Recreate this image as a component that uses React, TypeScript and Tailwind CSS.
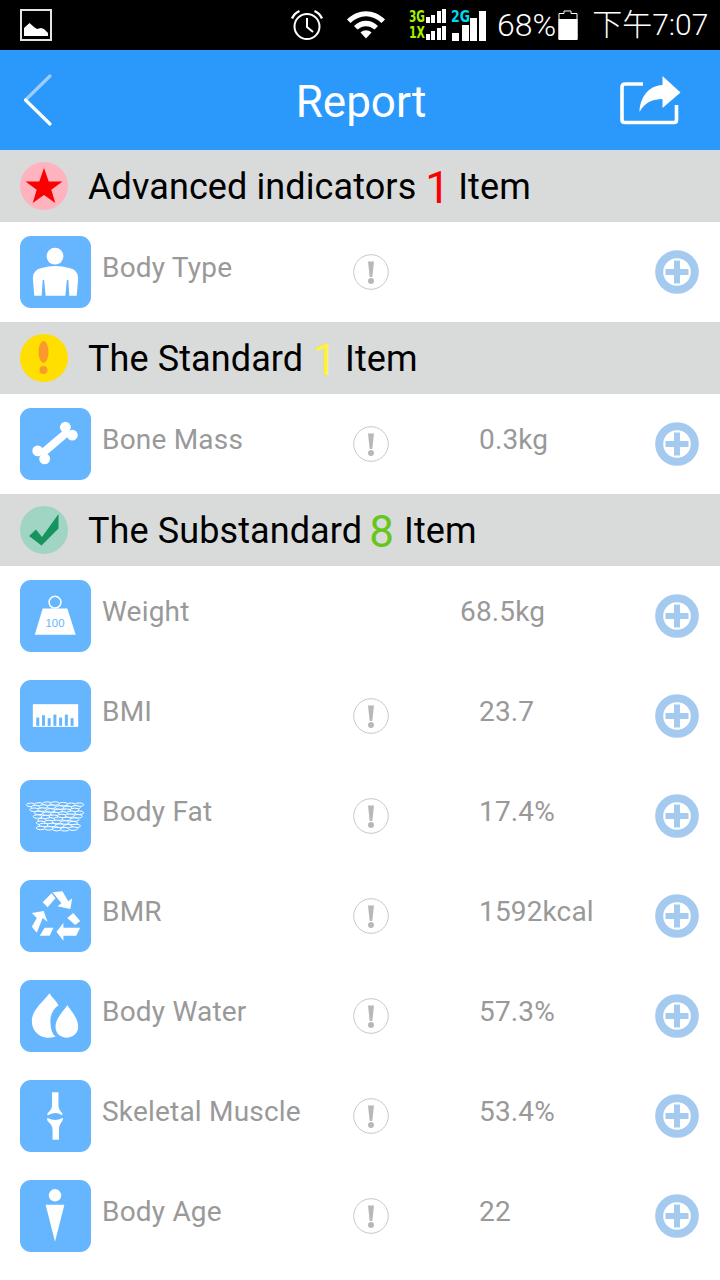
const ROBOTO = "font-['Roboto',sans-serif]"

function AlarmIcon() {
  return (
    <svg width="34" height="32" viewBox="0 0 34 32" fill="none" stroke="#fff">
      <circle cx="17" cy="17.5" r="12.5" strokeWidth="2" />
      <path d="M17 9v9l6 5" strokeWidth="2" />
      <path d="M2 9.5C3.5 6 6 3.5 9.5 2M32 9.5C30.5 6 28 3.5 24.5 2" strokeWidth="2.4" />
    </svg>
  )
}

function WifiIcon() {
  return (
    <svg width="40" height="30" viewBox="0 0 40 30" fill="#fff">
      <path d="M1 9.5C12 -1.5 28 -1.500 39 9.500L35.500 13C26 4 14 4 4.500 13Z" />
      <path d="M8 16C15 9 25 9 32 16L28.500 19.500C23 15 17 15 11.500 19.500Z" />
      <path d="M14.500 22.500C18 19.500 22 19.500 25.500 22.500L20 28.500Z" />
    </svg>
  )
}

function SignalIcon() {
  return (
    <svg width="78" height="32" viewBox="0 0 78 32" fontFamily="'DejaVu Sans Condensed','DejaVu Sans',sans-serif" fontWeight="700" fontSize="15">
      <text x="0" y="13" fill="#a4f000" textLength="16" lengthAdjust="spacingAndGlyphs">3G</text>
      <text x="0" y="29" fill="#a4f000" textLength="16" lengthAdjust="spacingAndGlyphs">1X</text>
      <text x="42" y="13" fill="#00d8f0" textLength="19" lengthAdjust="spacingAndGlyphs">2G</text>
      <g fill="#fff">
        <rect x="17" y="8" width="4" height="6" />
        <rect x="22" y="6" width="4" height="8" />
        <rect x="28" y="2" width="4" height="12" />
        <rect x="33" y="0" width="4" height="14" />
        <rect x="17" y="25" width="4" height="6" />
        <rect x="22" y="22" width="4" height="9" />
        <rect x="28" y="19" width="4" height="12" />
        <rect x="33" y="17" width="4" height="14" />
        <rect x="43" y="24" width="7" height="8" />
        <rect x="53" y="16" width="7" height="16" />
        <rect x="61" y="9" width="7" height="23" />
        <rect x="70" y="2" width="7" height="30" />
      </g>
    </svg>
  )
}

function StatusBar() {
  return (
    <div className="flex h-[50px] items-center bg-black text-white">
      <svg className="ml-5" width="32" height="32" viewBox="0 0 32 32">
        <rect x="1" y="1" width="30" height="30" fill="#000" stroke="#e5e5e5" strokeWidth="2" />
        <path d="M4 27V19L9.500 14 14 18 17 20 21 19 24 20 28 24V27Z" fill="#fff" />
      </svg>
      <div className="ml-[238px]"><AlarmIcon /></div>
      <div className="ml-[22px]"><WifiIcon /></div>
      <div className="ml-[23px]"><SignalIcon /></div>
      <span className={`ml-[10px] text-[32px] leading-none font-light ${ROBOTO}`}>68%</span>
      <svg className="ml-[2px]" width="20" height="30" viewBox="0 0 20 30">
        <path d="M6 1H13V3.500H19V29H1V3.500H6Z" fill="none" stroke="#fff" />
        <rect x="0.500" y="9" width="19" height="21" fill="#fff" />
      </svg>
      <span className="ml-[14px] text-[30px] leading-none font-light whitespace-nowrap font-['Roboto','Noto_Sans_CJK_TC',sans-serif]">下午7:07</span>
    </div>
  )
}

function Header() {
  return (
    <div className="relative flex h-[100px] items-center justify-center bg-[#2b99fc]">
      <svg className="absolute top-0 left-0" width="70" height="100" viewBox="0 0 70 100" fill="none" strokeWidth="3.200" strokeLinecap="round">
        <path d="M50 26L25.500 50" stroke="#9dcdfd" />
        <path d="M25.500 50L50 74" stroke="#fff" />
      </svg>
      <span className={`ml-[2px] pt-1 text-[44px] leading-none text-white ${ROBOTO}`}>Report</span>
      <svg className="absolute top-0 right-0" width="110" height="100" viewBox="0 0 110 100">
        <path d="M33 34H15Q12 34 12 37V70Q12 72.500 15 72.500H64Q66.500 72.500 66.500 70V55" fill="none" stroke="#fff" strokeWidth="3.600" />
        <path d="M52.500 26L70.500 42.500 52.500 58V49C43 49 35 52 29.500 62C30 47 39 35.500 52.500 35Z" fill="#fff" />
      </svg>
    </div>
  )
}

function StarBadge() {
  return (
    <svg width="48" height="48" viewBox="0 0 48 48">
      <circle cx="24" cy="24" r="24" fill="#ffb3bf" />
      <path d="M24 6L28.700 19.500H42.500L31.300 27.800 35.300 41 24 33 12.700 41 16.700 27.800 5.500 19.500H19.300Z" fill="#fb0000" />
    </svg>
  )
}

function WarnBadge() {
  return (
    <svg width="48" height="48" viewBox="0 0 48 48">
      <circle cx="24" cy="24" r="24" fill="#ffdf00" />
      <ellipse cx="23.500" cy="18" rx="5" ry="11" fill="#fb9a2c" />
      <circle cx="23.500" cy="36" r="4" fill="#fb9a2c" />
    </svg>
  )
}

function CheckBadge() {
  return (
    <svg width="48" height="48" viewBox="0 0 48 48">
      <circle cx="24" cy="24" r="24" fill="#a1d5c3" />
      <path d="M9 30L16 23.500 22 31 38.500 8V22.500L21.500 39.500Z" fill="#16935f" />
    </svg>
  )
}

function BodyTypeIcon() {
  return (
    <svg viewBox="0 0 72 72" className="h-full w-full" fill="#fff">
      <circle cx="35.500" cy="20" r="8.500" />
      <path d="M22 32Q36 28 50 32Q59 34 59 42L57.500 60H50L49 44H47.500L46 60H26L24.500 44H23L22 60H14.500L13 42Q13 34 22 32Z" />
    </svg>
  )
}

function BoneIcon() {
  return (
    <svg viewBox="0 0 72 72" className="h-full w-full" fill="#fff">
      <path d="M21 47L49 23" stroke="#fff" strokeWidth="8" />
      <circle cx="46" cy="19" r="5.500" /><circle cx="53" cy="27" r="5.500" />
      <circle cx="18" cy="43" r="5.500" /><circle cx="25" cy="51" r="5.500" />
    </svg>
  )
}

function WeightIcon() {
  return (
    <svg viewBox="0 0 72 72" className="h-full w-full">
      <circle cx="35.500" cy="22" r="6" fill="none" stroke="#fff" strokeWidth="1.500" />
      <path d="M23 28.500H48L56.500 55H15Z" fill="#fff" />
      <text x="35.500" y="47.500" textAnchor="middle" fontSize="11.500" fill="#66b5ff" fontFamily="'Liberation Sans',sans-serif">100</text>
    </svg>
  )
}

function BmiIcon() {
  const bars = [14, 18, 13, 19, 14, 19, 13]
  return (
    <svg viewBox="0 0 72 72" className="h-full w-full">
      <rect x="13" y="24" width="46" height="23" fill="#fff" />
      {bars.map((h, i) => (
        <rect key={i} x={16.500 + i * 5.800} y={46 - h * 0.6} width="3" height={h * 0.6} fill="#66b5ff" />
      ))}
    </svg>
  )
}

// 脂肪格:上宽下窄,每行错开一点
function BodyFatIcon() {
  const cells: { x: number; y: number }[] = []
  for (let r = 0; r < 9; r++) {
    const left = 11 + Math.min(r * 1.700, 10) + (r % 2) * 3
    const right = 62 - r * 0.600
    for (let x = left; x < right; x += 8.200) {
      cells.push({ x, y: 24 + r * 3.100 + Math.sin(x / 7 + r) * 0.700 })
    }
  }
  return (
    <svg viewBox="0 0 72 72" className="h-full w-full" fill="#66b5ff" stroke="#fff" strokeWidth="1">
      {cells.map((p, i) => (
        <ellipse key={i} cx={p.x} cy={p.y} rx="4.500" ry="1.800" />
      ))}
    </svg>
  )
}

function RecycleIcon() {
  return (
    <svg viewBox="0 0 72 72" className="h-full w-full" fill="#fff">
      <path d="M23 22L32 13 36 18 28 27Z" />
      <path d="M33 12L43 11 49 21 53 18 51 29 38 26 42 23Z" />
      <path d="M48 38L54 33 61 41 56 45Z" />
      <path d="M61 48L57 56H44V61L37 52 44 43V48Z" />
      <path d="M25 48H34L30 56H20Z" />
      <path d="M12 33L24 31 28 42 23 38 17 53 12 47 17 38Z" />
    </svg>
  )
}

function DropsIcon() {
  return (
    <svg viewBox="0 0 72 72" className="h-full w-full" fill="#fff">
      <path d="M30 13C33 18 37 21 39 25C33 29 30 36 31 44C31 50 33 54 36 57C33 58 30 58 27 58C18 57 12 50 12 41C12 30 23 22 30 13Z" />
      <path d="M48 25C53 32 59 39 59 47C59 54 53 58 47.500 58C41 58 36 54 36 47C36 39 43 32 48 25Z" />
    </svg>
  )
}

function JointIcon() {
  return (
    <svg viewBox="0 0 72 72" className="h-full w-full" fill="#fff">
      <path d="M32.500 12H39V25C39 29 41 31 43 33Q43 36 42 35Q36 31 29 35Q27 36 28 33C30 31 32.500 29 32.500 25Z" />
      <path d="M28 38Q36 42 43 38Q44 37 43 41C41 43 39.500 46 39.500 50V60H33V50C33 46 31 44 28 41Q27 38 28 38Z" />
    </svg>
  )
}

function BodyAgeIcon() {
  return (
    <svg viewBox="0 0 72 72" className="h-full w-full" fill="#fff">
      <circle cx="35.500" cy="15" r="6.300" />
      <path d="M26 24.500H45L35.500 62Z" />
    </svg>
  )
}

function InfoMark() {
  return (
    <svg width="36" height="36" viewBox="0 0 36 36">
      <circle cx="18" cy="18" r="17.300" fill="none" stroke="#c8c8c8" strokeWidth="1" />
      <path d="M15 7.500H21L19.300 23H16.700Z" fill="#b8b8b8" />
      <circle cx="18" cy="27" r="3" fill="#b8b8b8" />
    </svg>
  )
}

function PlusMark() {
  return (
    <svg width="44" height="44" viewBox="0 0 44 44">
      <circle cx="22" cy="22" r="17.800" fill="none" stroke="#a5caf0" strokeWidth="8" />
      <path d="M22 10.500V33.500M10.500 22H33.500" stroke="#a5caf0" strokeWidth="6" />
    </svg>
  )
}

type Metric = {
  label: string
  value?: string
  valueX?: number
  info?: boolean
  icon: React.ReactNode
}

function MetricRow({ label, value, valueX = 0, info = true, icon }: Metric) {
  return (
    <div className={`flex h-[100px] items-start pr-[21px] ${ROBOTO}`}>
      <div className="mt-[14px] ml-5 h-[72px] w-[71px] shrink-0 rounded-[11px] bg-[#66b5ff]">{icon}</div>
      <span className="mt-[29px] ml-[11px] w-[251px] shrink-0 text-[28px] leading-[34px] tracking-[0.2px] whitespace-nowrap text-[#999]">
        {label}
      </span>
      <div className="mt-[32px] h-9 w-9 shrink-0">{info && <InfoMark />}</div>
      <span
        className="mt-[29px] pl-[90px] text-[28px] leading-[34px] tracking-[0.15px] whitespace-nowrap text-[#999]"
        style={{ marginLeft: valueX }}
      >
        {value}
      </span>
      <div className="mt-[28px] ml-auto shrink-0">
        <PlusMark />
      </div>
    </div>
  )
}

type SectionProps = {
  badge: React.ReactNode
  title: string
  count: string
  color: string
  countGap: string
  itemGap: string
}

function SectionHeader({ badge, title, count, color, countGap, itemGap }: SectionProps) {
  return (
    <div className={`flex h-[72px] items-center bg-[#d9dbdb] pl-5 text-[36px] leading-none tracking-[0.1px] text-black ${ROBOTO}`}>
      {badge}
      <span className="ml-5 pt-[2px] whitespace-nowrap">{title}</span>
      <span className={`pt-[3px] text-[44px] ${countGap} ${color}`}>{count}</span>
      <span className={`pt-[2px] whitespace-nowrap ${itemGap}`}>Item</span>
    </div>
  )
}

export default function App() {
  return (
    <div className="h-[1280px] w-[720px] overflow-hidden bg-white">
      <StatusBar />
      <Header />
      <SectionHeader badge={<StarBadge />} title="Advanced indicators" count="1" color="text-[#fb0000]" countGap="ml-[9px]" itemGap="ml-2" />
      <MetricRow label="Body Type" icon={<BodyTypeIcon />} />
      <SectionHeader badge={<WarnBadge />} title="The Standard" count="1" color="text-[#fff23a]" countGap="ml-[9px]" itemGap="ml-2" />
      <MetricRow label="Bone Mass" value="0.3kg" icon={<BoneIcon />} />
      <SectionHeader badge={<CheckBadge />} title="The Substandard" count="8" color="text-[#66c71a]" countGap="ml-[7px]" itemGap="ml-[10px]" />
      <MetricRow label="Weight" value="68.5kg" valueX={-19} info={false} icon={<WeightIcon />} />
      <MetricRow label="BMI" value="23.7" icon={<BmiIcon />} />
      <MetricRow label="Body Fat" value="17.4%" icon={<BodyFatIcon />} />
      <MetricRow label="BMR" value="1592kcal" icon={<RecycleIcon />} />
      <MetricRow label="Body Water" value="57.3%" icon={<DropsIcon />} />
      <MetricRow label="Skeletal Muscle" value="53.4%" icon={<JointIcon />} />
      <MetricRow label="Body Age" value="22" icon={<BodyAgeIcon />} />
    </div>
  )
}
